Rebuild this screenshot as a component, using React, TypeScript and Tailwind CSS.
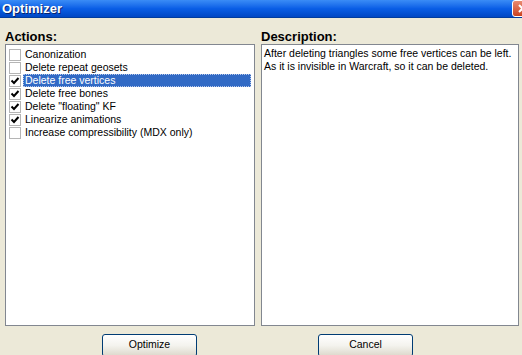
const ACTIONS = [
  { label: 'Canonization', checked: false },
  { label: 'Delete repeat geosets', checked: false },
  { label: 'Delete free vertices', checked: true, selected: true },
  { label: 'Delete free bones', checked: true },
  { label: 'Delete "floating" KF', checked: true },
  { label: 'Linearize animations', checked: true },
  { label: 'Increase compressibility (MDX only)', checked: false },
]

const CheckBox = ({ checked }: { checked: boolean }) => (
  <div className="w-[12px] h-[12px] shrink-0 border border-[#b5b5b5] bg-white flex items-center justify-center">
    {checked && (
      <svg width="10" height="10" viewBox="0 0 10 10">
        <path d="M1.5 4.5 L4 7 L8.5 2" stroke="#000" strokeWidth="2" fill="none" />
      </svg>
    )}
  </div>
)

const XpButton = ({ text }: { text: string }) => (
  <button className="w-[95px] h-[23px] shrink-0 rounded-[3px] border border-[#003c74] bg-gradient-to-b from-white via-[#f4f3ee] to-[#dcd8cb] text-[10.5px] leading-[13px] text-black pb-[2px]">
    {text}
  </button>
)

const App = () => {
  return (
    <div className="w-[522px] h-[355px] overflow-hidden bg-[#ece9d8] flex flex-col font-['Liberation_Sans',Arial,sans-serif]">
      <div className="h-[18px] shrink-0 flex items-center bg-gradient-to-b from-[#3a8cf6] via-[#0a5ee6] to-[#0047c4] border-b border-[#003c9e]">
        <span className="pl-[2px] text-white font-bold text-[13px] leading-[16px] [text-shadow:1px_1px_#0a246a]">Optimizer</span>
        <div className="ml-auto mr-[-11px] w-[21px] h-[17px] rounded-[3px] border border-white bg-gradient-to-b from-[#e98a6f] to-[#c9401e] flex items-center justify-center">
          <svg width="9" height="9" viewBox="0 0 9 9">
            <path d="M1 1 L8 8 M8 1 L1 8" stroke="#fff" strokeWidth="2" />
          </svg>
        </div>
      </div>

      <div className="flex mt-[12px] ml-[5px] gap-[6px]">
        <div className="w-[250px] flex flex-col">
          <p className="text-[13px] leading-[14px] font-bold text-black">Actions:</p>
          <div className="h-[282px] border border-[#828790] bg-white pt-[3px]">
            {ACTIONS.map(item => (
              <div key={item.label} className="h-[13px] flex items-center pl-[3px] pr-[3px]">
                <CheckBox checked={item.checked} />
                <span
                  className={
                    'ml-[2px] flex-1 h-[13px] pl-[2px] text-[10.5px] leading-[13px] whitespace-nowrap ' +
                    (item.selected ? 'bg-[#316ac5] text-white outline-1 outline-dotted outline-[#b7c8ea] -outline-offset-1' : 'text-black')
                  }
                >
                  {item.label}
                </span>
              </div>
            ))}
          </div>
        </div>
        <div className="w-[258px] flex flex-col">
          <p className="text-[13px] leading-[14px] font-bold text-black">Description:</p>
          <div className="h-[282px] border border-[#828790] bg-white pt-[2px] pl-[2px] text-[10.5px] leading-[13px] text-black whitespace-nowrap">
            <p>After deleting triangles some free vertices can be left.</p>
            <p>As it is invisible in Warcraft, so it can be deleted.</p>
          </div>
        </div>
      </div>

      <div className="flex mt-[8px] ml-[102px] gap-[121px]">
        <XpButton text="Optimize" />
        <XpButton text="Cancel" />
      </div>
    </div>
  )
}

export default App
